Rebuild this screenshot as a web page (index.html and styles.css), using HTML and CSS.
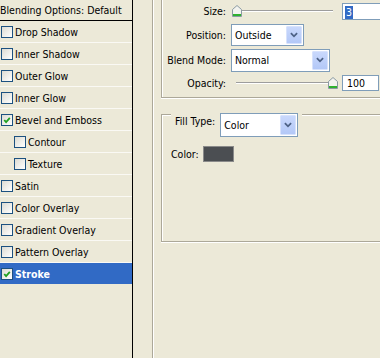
FILE: index.html
```html
<!DOCTYPE html>
<html lang="en">
<head>
    <meta charset="UTF-8">
    <title>Layer Style - Stroke</title>
    <link rel="stylesheet" href="styles.css">
</head>
<body>
    <div class="window">
        <aside class="styles-list">
            <div class="list-head">Blending Options: Default</div>
            <ul>
                <li><span class="check"></span>Drop Shadow</li>
                <li><span class="check"></span>Inner Shadow</li>
                <li><span class="check"></span>Outer Glow</li>
                <li><span class="check"></span>Inner Glow</li>
                <li><span class="check"><svg viewBox="0 0 11 11"><path d="M2.5 5.5 L4.5 7.8 L8.6 3.2"/></svg></span>Bevel and Emboss</li>
                <li class="sub"><span class="check"></span>Contour</li>
                <li class="sub"><span class="check"></span>Texture</li>
                <li><span class="check"></span>Satin</li>
                <li><span class="check"></span>Color Overlay</li>
                <li><span class="check"></span>Gradient Overlay</li>
                <li><span class="check"></span>Pattern Overlay</li>
                <li class="selected"><span class="check"><svg viewBox="0 0 11 11"><path d="M2.5 5.5 L4.5 7.8 L8.6 3.2"/></svg></span>Stroke</li>
            </ul>
        </aside>

        <section class="options">
            <div class="outer-group">
                <!-- Structure -->
                <div class="group structure">
                    <div class="field-grid">
                        <label>Size:</label>
                        <div class="control">
                            <div class="slider">
                                <div class="track"></div>
                                <svg class="thumb" style="left: 1px" viewBox="0 0 10 12"><path class="thumb-body" d="M0.5 4.5 L5 0.5 L9.5 4.5 L9.5 11.5 L0.5 11.5 Z"/><rect class="thumb-base" x="1" y="9" width="8" height="2"/></svg>
                            </div>
                            <div class="textbox wide"><span class="sel">3</span></div>
                        </div>

                        <label>Position:</label>
                        <div class="control">
                            <div class="select position">
                                <span class="value">Outside</span>
                                <span class="drop"><svg viewBox="0 0 9 6"><path d="M1 1 L4.5 4.5 L8 1"/></svg></span>
                            </div>
                        </div>

                        <label>Blend Mode:</label>
                        <div class="control">
                            <div class="select blend">
                                <span class="value">Normal</span>
                                <span class="drop"><svg viewBox="0 0 9 6"><path d="M1 1 L4.5 4.5 L8 1"/></svg></span>
                            </div>
                        </div>

                        <label>Opacity:</label>
                        <div class="control">
                            <div class="slider">
                                <div class="track"></div>
                                <svg class="thumb" style="left: 97px" viewBox="0 0 10 12"><path class="thumb-body" d="M0.5 4.5 L5 0.5 L9.5 4.5 L9.5 11.5 L0.5 11.5 Z"/><rect class="thumb-base" x="1" y="9" width="8" height="2"/></svg>
                            </div>
                            <div class="textbox">100</div>
                        </div>
                    </div>
                </div>

                <!-- Fill Type -->
                <div class="group fill">
                    <div class="fill-head">
                        <span class="fill-label">Fill Type:</span>
                        <div class="select fill-select">
                            <span class="value">Color</span>
                            <span class="drop"><svg viewBox="0 0 9 6"><path d="M1 1 L4.5 4.5 L8 1"/></svg></span>
                        </div>
                    </div>
                    <div class="color-row">
                        <span class="color-label">Color:</span>
                        <span class="swatch"></span>
                    </div>
                </div>
            </div>
        </section>
    </div>
</body>
</html>
```

FILE: styles.css
```css
/* Base */
* {
    margin: 0;
    padding: 0;
    box-sizing: border-box;
}

body {
    font-family: "DejaVu Sans Condensed", "DejaVu Sans", "Liberation Sans", sans-serif;
    font-stretch: condensed;
    font-size: 10.5px;
    color: #000;
    background-color: #ECE9D8;
    overflow: hidden;
}

.window {
    display: flex;
    width: 380px;
    height: 358px;
    overflow: hidden;
}

/* Styles list */
.styles-list {
    width: 133px;
    flex-shrink: 0;
    border-right: 1px solid #000;
}

.list-head {
    height: 21px;
    line-height: 20px;
    border-bottom: 1px solid #000;
    white-space: nowrap;
}

.styles-list ul {
    list-style: none;
}

.styles-list li {
    display: flex;
    align-items: center;
    height: 22px;
    padding-left: 1px;
    border-bottom: 1px solid #FAF9F4;
    white-space: nowrap;
}

.styles-list li.sub {
    padding-left: 14px;
}

.styles-list li.selected {
    background-color: #316AC5;
    color: white;
    font-weight: bold;
    border-bottom-color: #ECE9D8;
}

.check {
    width: 12px;
    height: 12px;
    margin-right: 2px;
    border: 1px solid #1C5180;
    background: linear-gradient(135deg, #DCDBD2, #FFFFFF);
    display: flex;
}

.check svg {
    width: 10px;
    height: 10px;
    fill: none;
    stroke: #21A121;
    stroke-width: 2;
}

/* Options panel */
.options {
    flex: 1;
    padding-left: 19px;
}

.outer-group {
    height: 100%;
    width: 260px;
    border-left: 1px solid #ACA899;
    box-shadow: inset 1px 0 0 #FFFFFF;
    padding-left: 8px;
}

.group {
    border-left: 1px solid #ACA899;
    width: 240px;
}

.structure {
    border-bottom: 1px solid #ACA899;
    box-shadow: inset 1px 0 0 #FFFFFF, 0 1px 0 #FFFFFF;
    padding-bottom: 5px;
}

.field-grid {
    display: grid;
    grid-template-columns: 64px 1fr;
    grid-template-rows: 22px 25px 26px 19px;
    column-gap: 5px;
    align-items: center;
}

.field-grid label {
    text-align: right;
}

.control {
    display: flex;
    align-items: center;
    gap: 5px;
}

/* Slider */
.slider {
    position: relative;
    width: 106px;
    height: 12px;
}

.track {
    margin: 5px 0 0 5px;
    width: 97px;
    height: 2px;
    border-top: 1px solid #9D9D9D;
    border-bottom: 1px solid #FFFFFF;
}

.thumb {
    position: absolute;
    top: 0;
    width: 10px;
    height: 12px;
}

.thumb-body {
    fill: #F3F3EF;
    stroke: #8B9AA2;
    stroke-width: 1;
}

.thumb-base {
    fill: #2FB12F;
}

.textbox {
    width: 37px;
    height: 16px;
    border: 1px solid #7F9DB9;
    background: #FFFFFF;
    padding-left: 4px;
    line-height: 14px;
}

.textbox.wide {
    width: 50px;
    height: 17px;
    margin-top: 1px;
    padding-left: 2px;
    padding-top: 1px;
}

.sel {
    display: inline-block;
    background: #316AC5;
    color: #FFFFFF;
    padding: 0 1px;
    line-height: 13px;
}

/* Dropdown */
.select {
    display: flex;
    align-items: stretch;
    border: 1px solid #7F9DB9;
    background: #FFFFFF;
    padding: 1px;
}

.select .value {
    flex: 1;
    padding-left: 2px;
    display: flex;
    align-items: center;
}

.select .drop {
    width: 16px;
    display: flex;
    align-items: center;
    justify-content: center;
    border: 1px solid #D7E2FC;
    border-radius: 1px;
    background: linear-gradient(#C9D8FC, #B3C8F7);
}

.drop svg {
    width: 8px;
    height: 6px;
    fill: none;
    stroke: #4D6185;
    stroke-width: 2;
}

.position {
    width: 73px;
    height: 22px;
}

.blend {
    width: 99px;
    height: 23px;
}

/* Fill type */
.fill {
    margin-top: 16px;
    height: 128px;
    border: 1px solid #ACA899;
    border-right: none;
    box-shadow: inset 1px 1px 0 #FFFFFF, 0 1px 0 #FFFFFF;
    padding-left: 9px;
}

.fill-head {
    display: inline-flex;
    align-items: flex-start;
    gap: 5px;
    margin-top: -10px;
    padding: 0 4px;
    background: #ECE9D8;
}

.fill-label {
    padding-top: 2px;
}

.fill-select {
    width: 78px;
    height: 24px;
}

.color-row {
    display: flex;
    align-items: center;
    margin-top: 9px;
}

.color-label {
    width: 32px;
}

.swatch {
    width: 31px;
    height: 16px;
    background: #4B4E52;
    border: 1px solid #8A8A8A;
}
```
